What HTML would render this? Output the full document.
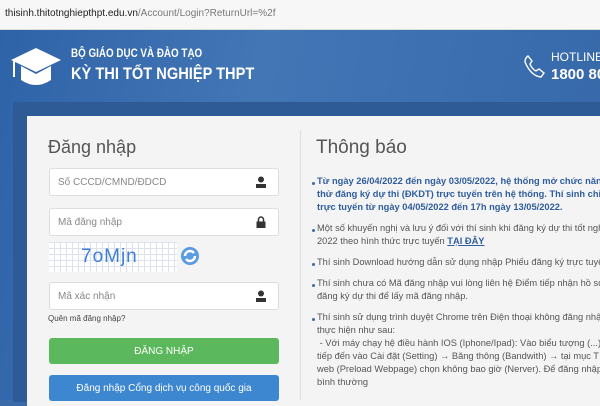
<!DOCTYPE html>
<html><head><meta charset="utf-8"><style>
*{margin:0;padding:0;box-sizing:border-box}
body{width:600px;height:400px;overflow:hidden;font-family:"Liberation Sans",sans-serif;background:#3a6aa8;position:relative}
.url{position:absolute;left:0;top:0;width:600px;height:30px;background:#f7f7f7;border-bottom:1px solid #ddd;font-size:10px;color:#777;padding:8px 0 0 5px}
.url b{font-weight:normal;color:#222}
.hdr{position:absolute;left:0;top:30px;width:600px;height:370px;background:linear-gradient(100deg,#2f63a8 0%,#4276b5 40%,#3b6fb0 70%,#3668a8 100%)}
.t1{position:absolute;left:71px;top:46px;color:#fff;font-size:12px;font-weight:bold;transform:scaleX(0.82);transform-origin:left;white-space:nowrap}
.t2{position:absolute;left:71px;top:64px;color:#fff;font-size:17px;font-weight:bold;transform:scaleX(0.86);transform-origin:left;white-space:nowrap}
.hl{position:absolute;left:551px;top:50px;color:#fff;font-size:12px;white-space:nowrap}
.hn{position:absolute;left:551px;top:66px;color:#fff;font-size:15px;font-weight:bold;white-space:nowrap}
.band{position:absolute;left:13px;top:102px;width:600px;height:300px;background:#2e5b96}
.panel{position:absolute;left:27px;top:116px;width:580px;height:290px;background:#f4f4f4}
.div{position:absolute;left:300px;top:130px;width:1px;height:270px;background:#ddd}
h1{position:absolute;font-weight:normal;color:#555;font-size:18px;white-space:nowrap}
.inp{position:absolute;left:49px;width:230px;height:28px;background:#fff;border:1px solid #ddd;border-radius:3px;font-size:10px;color:#888;padding:8px 0 0 8px}
.ic{position:absolute;right:12px;top:7px;width:10px;height:12px}
.btn{position:absolute;left:49px;width:230px;height:26px;border-radius:3px;color:#fff;font-size:10px;text-align:center;padding-top:8px}
ul{position:absolute;left:313px;top:175px;width:300px;list-style:none;font-size:9.3px;color:#555;line-height:13px}
li{margin-bottom:8px;padding-left:4px;position:relative}
li:before{content:"";position:absolute;left:-1px;top:7px;width:3px;height:3px;border-radius:50%;background:#3a6aa8}
.bd{color:#2f5d9e;font-weight:bold}
.cap{position:absolute;left:49px;top:242px;width:128px;height:30px;background-color:#fff;background-image:repeating-linear-gradient(90deg,transparent 0 5px,#dde2ee 5px 6px),repeating-linear-gradient(0deg,transparent 0 5px,#dde2ee 5px 6px);color:#3d7fd8;font-size:19px;padding:4px 0 0 32px;letter-spacing:1px}
</style></head><body>
<div class="url"><b>thisinh.thitotnghiepthpt.edu.vn</b>/Account/Login?ReturnUrl=%2f</div>
<div class="hdr"></div>
<svg style="position:absolute;left:11px;top:46px" width="50" height="42" viewBox="0 0 50 42"><polygon points="25,2 50,14 25,26 0,14" fill="#fff"/><path d="M10,20 L10,34 Q25,44 40,34 L40,20 L25,28 Z" fill="#fff"/><rect x="2" y="15" width="2" height="16" fill="#fff"/></svg>
<div class="t1">BỘ GIÁO DỤC VÀ ĐÀO TẠO</div>
<div class="t2">KỲ THI TỐT NGHIỆP THPT</div>
<svg style="position:absolute;left:523px;top:54px" width="22" height="24" viewBox="0 0 22 24"><path d="M5,2 L9,7 L7,10 Q9,15 13,17 L16,15 L21,19 L18,23 Q8,22 2,8 Q2,4 5,2Z" fill="none" stroke="#fff" stroke-width="1.4"/></svg>
<div class="hl">HOTLINE</div>
<div class="hn">1800 80</div>
<div class="band"></div>
<div class="panel"></div>
<div class="div"></div>
<h1 style="left:48px;top:137px">Đăng nhập</h1>
<div class="inp" style="top:168px">Số CCCD/CMND/ĐDCD<svg class="ic" viewBox="0 0 10 12"><circle cx="5" cy="3.5" r="3" fill="#333"/><rect x="0" y="8" width="10" height="4" fill="#333"/></svg></div>
<div class="inp" style="top:208px">Mã đăng nhập<svg class="ic" viewBox="0 0 10 12"><path d="M2.5,6 V3.5 a2.5,2.5 0 0 1 5,0 V6" fill="none" stroke="#333" stroke-width="1.5"/><rect x="0.5" y="5.5" width="9" height="6.5" fill="#333"/></svg></div>
<div class="cap">7oMjn</div>
<svg style="position:absolute;left:180px;top:246px" width="20" height="20" viewBox="0 0 20 20"><circle cx="10" cy="10" r="9" fill="#5b9be0"/><path d="M5,10 a5,5 0 0 1 9,-3 M15,10 a5,5 0 0 1 -9,3" stroke="#fff" stroke-width="2.5" fill="none"/></svg>
<div class="inp" style="top:282px">Mã xác nhận<svg class="ic" viewBox="0 0 10 12"><circle cx="5" cy="3.5" r="3" fill="#333"/><rect x="0" y="8" width="10" height="4" fill="#333"/></svg></div>
<div style="position:absolute;left:48px;top:314px;font-size:8px;color:#444">Quên mã đăng nhập?</div>
<div class="btn" style="top:338px;background:#5cb85c">ĐĂNG NHẬP</div>
<div class="btn" style="top:375px;background:#3d86d0">Đăng nhập Cổng dịch vụ công quốc gia</div>
<h1 style="left:316px;top:137px;font-size:19px">Thông báo</h1>
<ul>
<li class="bd" style="white-space:nowrap">Từ ngày 26/04/2022 đến ngày 03/05/2022, hệ thống mở chức năng<br>thử đăng ký dự thi (ĐKDT) trực tuyến trên hệ thống. Thí sinh chỉ<br>trực tuyến từ ngày 04/05/2022 đến 17h ngày 13/05/2022.</li>
<li style="white-space:nowrap">Một số khuyến nghị và lưu ý đối với thí sinh khi đăng ký dự thi tốt nghiệp<br>2022 theo hình thức trực tuyến <u class="bd">TẠI ĐÂY</u></li>
<li style="white-space:nowrap">Thí sinh Download hướng dẫn sử dụng nhập Phiếu đăng ký trực tuyến</li>
<li style="white-space:nowrap">Thí sinh chưa có Mã đăng nhập vui lòng liên hệ Điểm tiếp nhận hồ sơ<br>đăng ký dự thi để lấy mã đăng nhập.</li>
<li style="white-space:nowrap">Thí sinh sử dụng trình duyệt Chrome trên Điện thoại không đăng nhập<br>thực hiện như sau:<br>&nbsp;- Với máy chạy hệ điều hành IOS (Iphone/Ipad): Vào biểu tượng (...)<br>tiếp đến vào Cài đặt (Setting) → Băng thông (Bandwith) → tại mục T<br>web (Preload Webpage) chọn không bao giờ (Nerver). Để đăng nhập<br>bình thường</li>
</ul>
</body></html>
